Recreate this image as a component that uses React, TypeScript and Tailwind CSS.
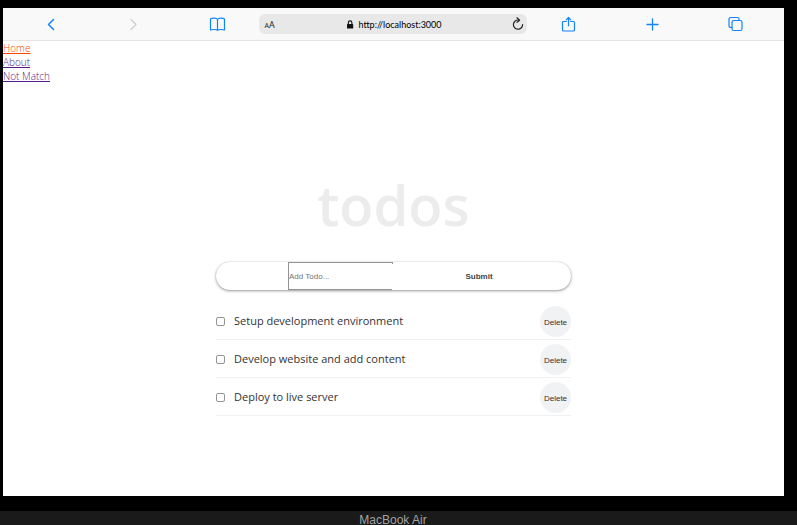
import type { ReactNode } from "react";

const links = [
  { label: "Home", color: "text-[#ff4500]" },
  { label: "About", color: "text-[#551a8b]" },
  { label: "Not Match", color: "text-[#551a8b]" },
];

const todos = [
  "Setup development environment",
  "Develop website and add content",
  "Deploy to live server",
];

function ToolButton({ label, muted, children }: { label: string; muted?: boolean; children: ReactNode }) {
  return (
    <button
      type="button"
      aria-label={label}
      className={`flex h-8 items-center justify-center ${muted ? "text-[#cfcfcf]" : "text-[#1283fb]"}`}
    >
      <svg
        width="16"
        height="16"
        viewBox="0 0 16 16"
        fill="none"
        stroke="currentColor"
        strokeWidth="1.2"
        strokeLinecap="round"
        strokeLinejoin="round"
        overflow="visible"
      >
        {children}
      </svg>
    </button>
  );
}

function Toolbar() {
  return (
    <header className="grid grid-cols-[1fr_1fr_1fr_268px_1fr_1fr_1fr] items-center border-b border-[#e4e4e4] bg-[#f9f9f9] pr-[7px] pl-[5px]">
      <ToolButton label="Back">
        <path d="M11.500 3.500 6.500 8.500l5 5" strokeWidth="1.5" />
      </ToolButton>
      <ToolButton label="Forward" muted>
        <path d="m6 3.500 5 5-5 5" strokeWidth="1.3" />
      </ToolButton>
      <ToolButton label="Bookmarks">
        <path d="M8.500 3.500C7.500 2 3.500 1.600 1.500 3v11c2-.8 6-.6 7 .3 1-.9 5-1.100 7-.3V3c-2-1.400-6-1-7 .5v10.800" />
      </ToolButton>
      <div className="flex h-5 items-center justify-between rounded-md bg-[#e8e8e8] pr-[3px] pl-1.5">
        <button type="button" aria-label="Text size" className="flex w-4 items-baseline pt-0.5 text-[#222]">
          <span className="text-[7px] leading-3">A</span>
          <span className="text-[9px] leading-3">A</span>
        </button>
        <div className="flex items-center gap-1 pt-px pr-1 text-black">
          <svg width="8" height="9" viewBox="0 0 8 9" aria-hidden="true">
            <rect x="1" y="4" width="6.200" height="4.600" rx="0.700" fill="#111" />
            <path d="M2.300 4.300V2.700a1.800 1.800 0 0 1 3.600 0v1.600" fill="none" stroke="#111" strokeWidth="1.100" />
          </svg>
          <span className="font-['Lato',sans-serif] text-[9px] leading-4">http://localhost:3000</span>
        </div>
        <button type="button" aria-label="Reload" className="text-[#222]">
          <svg width="12" height="14" viewBox="0 0 12 14" fill="none" stroke="currentColor" strokeWidth="1.200" strokeLinecap="round" strokeLinejoin="round">
            <path d="M6.800 3.100A4.600 4.600 0 1 0 10.600 7.600" />
            <path d="m5 .8 2.600 2.400L5 5.400" />
          </svg>
        </button>
      </div>
      <ToolButton label="Share">
        <path d="M6.300 5.500H3.500a1 1 0 0 0-1 1v7.500a1 1 0 0 0 1 1h10a1 1 0 0 0 1-1V6.500a1 1 0 0 0-1-1h-2.800M8.500 9.800V1.500M6.200 3.800l2.300-2.300 2.300 2.300" />
      </ToolButton>
      <ToolButton label="New tab">
        <path d="M8.500 3v11M3 8.500h11" strokeWidth="1.300" />
      </ToolButton>
      <ToolButton label="Tabs">
        <rect x="5" y="4.500" width="10" height="10" rx="1.800" />
        <path d="M4.800 11.500H3.700A1.700 1.700 0 0 1 2 9.800V3.200a1.700 1.700 0 0 1 1.700-1.700h6.700a1.700 1.700 0 0 1 1.700 1.700v1" />
      </ToolButton>
    </header>
  );
}

function TodoForm() {
  return (
    <form
      className="mt-5 flex h-7 rounded-full pr-[5px] pl-[72px] shadow-[0_0_1px_rgba(0,0,0,0.2),0_1px_3px_rgba(0,0,0,0.4)]"
      onSubmit={(event) => event.preventDefault()}
    >
      <input
        type="text"
        aria-label="Add Todo"
        placeholder="Add Todo..."
        className="w-[105px] rounded-none border border-[#949494] pt-px font-['Liberation_Sans',sans-serif] text-[8px] text-[#333] outline-none placeholder:text-[#757575]"
      />
      <button
        type="submit"
        className="relative mt-0.5 -ml-px flex-1 rounded-r-full bg-white pb-px font-['Liberation_Sans',sans-serif] text-[8px] font-bold text-[#444]"
      >
        Submit
      </button>
    </form>
  );
}

function TodoItem({ title, id }: { title: string; id: string }) {
  return (
    <li className="flex h-[38px] items-center border-b border-[#f1f1f1] pt-0.5">
      <input
        type="checkbox"
        id={id}
        className="size-[9px] shrink-0 appearance-none rounded-[2px] border border-[#949494] bg-white checked:bg-[#0075ff]"
      />
      <label htmlFor={id} className="ml-[9px] flex-1 pb-0.5 text-[11px] leading-4 text-[#333]">
        {title}
      </label>
      <button
        type="button"
        className="size-[31px] rounded-full bg-[#f1f2f4] pt-0.5 font-['Liberation_Sans',sans-serif] text-[8px] text-[#333]"
      >
        Delete
      </button>
    </li>
  );
}

export default function App() {
  return (
    <div className="flex h-screen flex-col overflow-hidden bg-black font-['Open_Sans','Noto_Sans',sans-serif]">
      <div className="mt-2 mr-[13px] mb-[15px] ml-[3px] flex flex-1 flex-col bg-white">
        <Toolbar />
        <nav className="flex flex-col items-start text-[10px] leading-[14px] font-light">
          {links.map((link) => (
            <a key={link.label} href="#" className={`underline ${link.color}`}>
              {link.label}
            </a>
          ))}
        </nav>
        <main className="mx-auto mt-[84px] w-full max-w-[355px]">
          <h1 className="text-center text-[56px] leading-[75px] font-semibold text-[#ececec]">todos</h1>
          <TodoForm />
          <ul className="mt-3">
            {todos.map((title, index) => (
              <TodoItem key={title} title={title} id={`todo-${index}`} />
            ))}
          </ul>
        </main>
      </div>
      <footer className="h-[14px] bg-[#1a1a1a] pt-[3px] pr-[11px] text-center font-['Liberation_Sans',sans-serif] text-[12px] leading-3 text-[#a3a3a3]">
        MacBook Air
      </footer>
    </div>
  );
}
